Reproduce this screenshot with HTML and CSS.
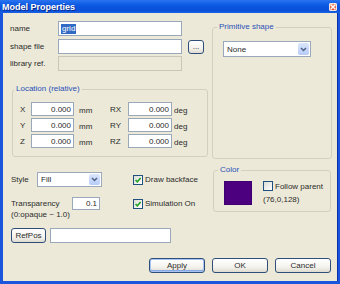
FILE: index.html
```html
<!DOCTYPE html>
<html lang="en">
<head>
    <meta charset="UTF-8">
    <title>Model Properties</title>
    <link rel="stylesheet" href="styles.css">
</head>
<body>
<div class="window">
    <div class="titlebar">
        <span class="title">Model Properties</span>
        <span class="close"><svg width="6" height="6" viewBox="0 0 6 6"><path d="M0.5 0.5 L5.5 5.5 M5.5 0.5 L0.5 5.5" stroke="#fff" stroke-width="1.4"/></svg></span>
    </div>
    <div class="client">
        <div class="top">
            <div class="left">
                <div class="field-row">
                    <span class="field-label">name</span>
                    <div class="edit wide"><span class="sel">grid</span></div>
                </div>
                <div class="field-row">
                    <span class="field-label">shape file</span>
                    <div class="edit wide"></div>
                    <button class="btn dots">...</button>
                </div>
                <div class="field-row last">
                    <span class="field-label">library ref.</span>
                    <div class="edit wide disabled"></div>
                </div>
                <fieldset class="group location">
                    <legend>Location (relative)</legend>
                    <div class="loc-grid">
                        <span>X</span><div class="edit num">0.000</div><span class="unit">mm</span>
                        <span>RX</span><div class="edit num">0.000</div><span class="unit">deg</span>
                        <span>Y</span><div class="edit num">0.000</div><span class="unit">mm</span>
                        <span>RY</span><div class="edit num">0.000</div><span class="unit">deg</span>
                        <span>Z</span><div class="edit num">0.000</div><span class="unit">mm</span>
                        <span>RZ</span><div class="edit num">0.000</div><span class="unit">deg</span>
                    </div>
                </fieldset>
            </div>
            <fieldset class="group primitive">
                <legend>Primitive shape</legend>
                <div class="combo shape-combo">
                    <span class="combo-text">None</span>
                    <span class="combo-btn"><svg width="7" height="5" viewBox="0 0 7 5"><path d="M1 1 L3.5 3.5 L6 1" fill="none" stroke="#4d6185" stroke-width="1.5"/></svg></span>
                </div>
            </fieldset>
        </div>
        <div class="middle">
            <div class="style-col">
                <div class="style-row">
                    <span class="style-label">Style</span>
                    <div class="combo style-combo">
                        <span class="combo-text">Fill</span>
                        <span class="combo-btn"><svg width="7" height="5" viewBox="0 0 7 5"><path d="M1 1 L3.5 3.5 L6 1" fill="none" stroke="#4d6185" stroke-width="1.5"/></svg></span>
                    </div>
                </div>
                <div class="trans-row">
                    <span class="trans-label">Transparency<br>(0:opaque ~ 1.0)</span>
                    <div class="edit num trans">0.1</div>
                </div>
            </div>
            <div class="check-col">
                <label class="check-row"><span class="check on"><svg width="8" height="8" viewBox="0 0 8 8"><path d="M1.5 4 L3.3 5.8 L6.6 2" fill="none" stroke="#21a121" stroke-width="1.6"/></svg></span>Draw backface</label>
                <label class="check-row second"><span class="check on"><svg width="8" height="8" viewBox="0 0 8 8"><path d="M1.5 4 L3.3 5.8 L6.6 2" fill="none" stroke="#21a121" stroke-width="1.6"/></svg></span>Simulation On</label>
            </div>
            <fieldset class="group color">
                <legend>Color</legend>
                <div class="color-body">
                    <div class="swatch"></div>
                    <div class="color-info">
                        <label class="check-row"><span class="check"></span>Follow parent</label>
                        <span class="rgb">(76,0,128)</span>
                    </div>
                </div>
            </fieldset>
        </div>
        <div class="refpos-row">
            <button class="btn refpos">RefPos</button>
            <div class="edit refpos-edit"></div>
        </div>
        <div class="buttons">
            <button class="btn push default">Apply</button>
            <button class="btn push">OK</button>
            <button class="btn push">Cancel</button>
        </div>
    </div>
</div>
</body>
</html>
```

FILE: styles.css
```css
* {
    margin: 0;
    padding: 0;
    box-sizing: border-box;
}
body {
    width: 340px;
    height: 284px;
    overflow: hidden;
    font-family: "Liberation Sans", Arial, sans-serif;
    font-size: 8px;
    color: #2b2b2b;
}

/* window frame */
.window {
    width: 340px;
    height: 284px;
    display: flex;
    flex-direction: column;
    background: #1a55dc;
}
.titlebar {
    height: 13px;
    display: flex;
    align-items: center;
    justify-content: space-between;
    padding: 0 3px 0 2px;
    background: linear-gradient(#2a74f0, #0b58e2 40%, #0a50d8 80%, #1b62e4);
}
.title {
    color: #fff;
    font-weight: bold;
    font-size: 9px;
    text-shadow: 1px 1px 0 #0b2a8a;
}
.close {
    width: 8px;
    height: 8px;
    display: flex;
    align-items: center;
    justify-content: center;
    border: 1px solid #f4e6e0;
    border-radius: 1px;
    background: linear-gradient(#e88a6c, #d9482a);
}
.client {
    height: 268px;
    margin: 0 2px 0 3px;
    padding: 8px 5px 0 7px;
    background: #ece9d8;
    border-right: 1px solid #0b2fa8;
}

/* common controls */
.edit {
    height: 15px;
    background: #fff;
    border: 1px solid #9aa8bc;
    display: flex;
    align-items: center;
    padding: 0 2px;
    white-space: nowrap;
}
.edit.disabled {
    background: #ece9d8;
    border-color: #c9c7ba;
}
.edit.num {
    justify-content: flex-end;
    height: 14px;
}
.sel {
    background: #316ac5;
    color: #fff;
    line-height: 10px;
    padding: 0 1px;
}
.btn {
    font-family: inherit;
    font-size: 8px;
    color: #2b2b2b;
    border: 1px solid #2f4f7a;
    border-radius: 3px;
    background: linear-gradient(#ffffff, #f4f3ee 60%, #dedbcf);
}
.combo {
    height: 15px;
    display: flex;
    align-items: stretch;
    background: #fff;
    border: 1px solid #9aa8bc;
}
.combo-text {
    flex: 1;
    display: flex;
    align-items: center;
    padding-left: 3px;
}
.combo-btn {
    width: 11px;
    margin: 1px;
    display: flex;
    align-items: center;
    justify-content: center;
    border-radius: 2px;
    background: linear-gradient(#dbe6fd, #b7cbf7);
}
.group {
    border: 1px solid #d4d0bf;
    border-radius: 3px;
    min-width: 0;
    padding-left: 0;
    padding-right: 0;
}
.group legend {
    margin-left: 4px;
    padding: 0 2px;
    line-height: 12px;
    color: #2a50b8;
}
.check-row {
    display: flex;
    align-items: center;
    white-space: nowrap;
}
.check {
    width: 10px;
    height: 10px;
    margin-right: 2px;
    border: 1px solid #1c5180;
    background: linear-gradient(135deg, #dcdcd6, #fff);
    display: flex;
    align-items: center;
    justify-content: center;
}

/* top part */
.top {
    display: flex;
    gap: 4px;
    height: 138px;
}
.left {
    width: 198px;
}
.field-row {
    display: flex;
    align-items: center;
    height: 15px;
    margin-bottom: 3px;
}
.field-row + .field-row {
    margin-bottom: 2px;
}
.field-row.last {
    margin-bottom: 0;
}
.field-label {
    width: 48px;
}
.edit.wide {
    width: 124px;
}
.dots {
    width: 16px;
    height: 14px;
    margin-left: 6px;
    line-height: 8px;
}
.location {
    margin: 12px 0 0 2px;
    width: 196px;
    padding-top: 7px;
    padding-bottom: 8px;
}
.location legend {
    margin-left: 1px;
}
.loc-grid {
    display: grid;
    grid-template-columns: 11px 43px 36px 18px 44px auto;
    grid-auto-rows: 14px;
    row-gap: 2px;
    align-items: center;
    margin-left: 7px;
}
.unit {
    padding: 3px 0 0 5px;
}
.unit:nth-child(6n) {
    padding-left: 2px;
}
.primitive {
    width: 120px;
    height: 138px;
    padding-top: 8px;
}
.shape-combo {
    width: 88px;
    height: 16px;
    margin-left: 10px;
}

/* middle part */
.middle {
    display: flex;
    height: 60px;
}
.style-col {
    width: 123px;
    padding-top: 13px;
}
.style-row {
    display: flex;
    align-items: center;
    height: 15px;
}
.style-label {
    width: 27px;
    padding-left: 1px;
}
.style-combo {
    width: 65px;
}
.trans-row {
    display: flex;
    margin-top: 10px;
}
.trans-label {
    width: 62px;
    padding: 1px 0 0 1px;
    line-height: 11px;
}
.edit.trans {
    width: 28px;
    height: 13px;
}
.check-col {
    width: 80px;
    padding-top: 13px;
}
.check-col .check-row {
    height: 15px;
}
.check-col .second {
    margin-top: 9px;
}
.color {
    width: 118px;
    height: 48px;
    margin-top: 5px;
    padding-top: 5px;
}
.color-body {
    display: flex;
    margin-left: 10px;
}
.swatch {
    width: 28px;
    height: 24px;
    background: #4c0080;
    border: 1px solid #3e0070;
}
.color-info {
    margin-left: 11px;
    display: flex;
    flex-direction: column;
    gap: 4px;
}
.color-info .check-row {
    height: 10px;
}

/* bottom rows */
.refpos-row {
    display: flex;
    align-items: center;
    margin-top: 9px;
    padding-left: 1px;
}
.refpos {
    width: 35px;
    height: 15px;
}
.refpos-edit {
    width: 121px;
    margin-left: 4px;
}
.buttons {
    display: flex;
    justify-content: flex-end;
    gap: 7px;
    margin-top: 15px;
    padding-right: 1px;
}
.push {
    width: 56px;
    height: 15px;
}
.push.default {
    box-shadow: inset 0 0 0 1px #a9c4f0, inset 0 -1px 0 1px #86a8e6;
}
```
